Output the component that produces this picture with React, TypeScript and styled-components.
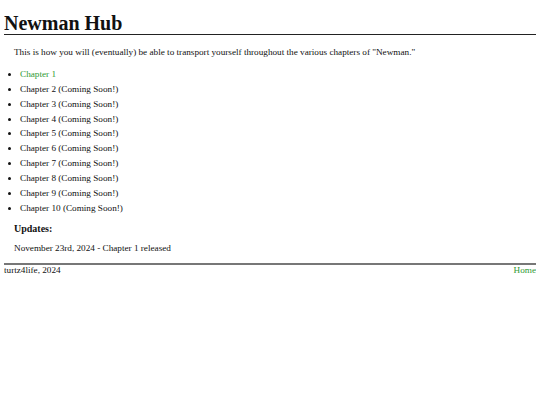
import styled, { createGlobalStyle } from 'styled-components'

const GlobalStyle = createGlobalStyle`
    body {
        margin : 4px;
        font-family : "Liberation Serif", "DejaVu Serif", serif;
        font-size : 9.2px;
        color : #111;
        background-color : #fff;
    }
`;

const chapters = [2, 3, 4, 5, 6, 7, 8, 9, 10];

const App = () => {
    return (
        <>
            <GlobalStyle />
            <Header_Body>
                <H1_Title>Newman Hub</H1_Title>
            </Header_Body>

            <Main_Body>
                <P_Text>This is how you will (eventually) be able to transport yourself throughout the various chapters of "Newman."</P_Text>

                <Ul_Chapters>
                    <Li_Chapter><A_Link href="#">Chapter 1</A_Link></Li_Chapter>
                    { chapters.map((num) => (
                        <Li_Chapter key={num}>Chapter {num} (Coming Soon!)</Li_Chapter>
                    ))}
                </Ul_Chapters>

                <H3_Updates>Updates:</H3_Updates>
                <P_Text>November 23rd, 2024 - Chapter 1 released</P_Text>
            </Main_Body>

            <Footer_Body>
                <span>turtz4life, 2024</span>
                <A_Link href="#">Home</A_Link>
            </Footer_Body>
        </>
    );
}

export default App;

// CSS
const Header_Body = styled.header`
    border-bottom : 1.5px solid #222;
    padding-top : 8px;
`;

const H1_Title = styled.h1`
    margin : 0;
    font-size : 20px;
    font-weight : bold;
    line-height : 22px;
`;

const Main_Body = styled.main`
    padding : 11px 10px 0 10px;
`;

const P_Text = styled.p`
    margin : 0 0 9px 0;
    line-height : 12px;
`;

const Ul_Chapters = styled.ul`
    margin : 0 0 7px 0;
    padding-left : 6px;
`;

const Li_Chapter = styled.li`
    line-height : 14.85px;
`;

const A_Link = styled.a`
    color : #2f9a35;
    text-decoration : none;
`;

const H3_Updates = styled.h3`
    margin : 0 0 6px 0;
    font-size : 10px;
    line-height : 14px;
`;

const Footer_Body = styled.footer`
    display : flex;
    justify-content : space-between;
    border-top : 2px solid #777;
    line-height : 11px;
`;
